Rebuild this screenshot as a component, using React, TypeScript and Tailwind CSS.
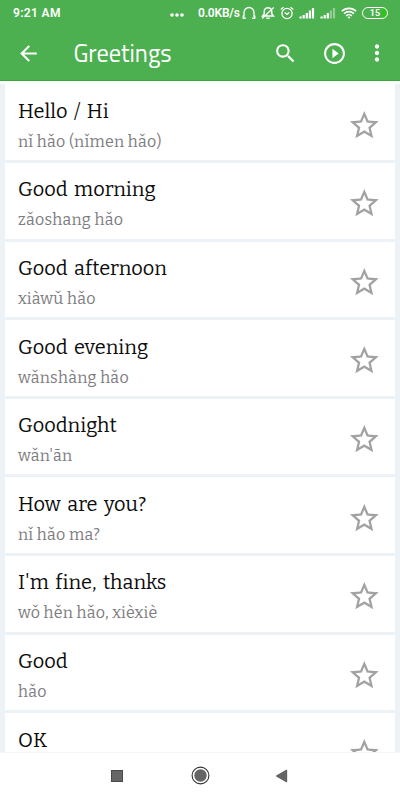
interface Phrase {
  text: string;
  pinyin?: string;
}

const phrases: Phrase[] = [
  { text: 'Hello / Hi', pinyin: 'nǐ hǎo (nǐmen hǎo)' },
  { text: 'Good morning', pinyin: 'zǎoshang hǎo' },
  { text: 'Good afternoon', pinyin: 'xiàwǔ hǎo' },
  { text: 'Good evening', pinyin: 'wǎnshàng hǎo' },
  { text: 'Goodnight', pinyin: "wǎn'ān" },
  { text: 'How are you?', pinyin: 'nǐ hǎo ma?' },
  { text: "I'm fine, thanks", pinyin: 'wǒ hěn hǎo, xièxiè' },
  { text: 'Good', pinyin: 'hǎo' },
  { text: 'OK' },
];

function HeadphonesIcon() {
  return (
    <svg width="14" height="14" viewBox="0 0 14 14" fill="none" stroke="white" strokeWidth="1.3">
      <path d="M2 11V6.5a5 5 0 0 1 10 0V11" />
      <path d="M1.3 9.5v2.7h2.5M12.7 9.5v2.7h-2.5" strokeWidth="1.5" />
    </svg>
  );
}

function MutedBellIcon() {
  return (
    <svg width="14" height="14" viewBox="0 0 14 14" fill="none" stroke="white" strokeWidth="1.4">
      <path d="M1.5 10h11l-1.7-2V5.5a3.8 3.8 0 0 0-7.6 0V8L1.5 10zM5.3 12.2h3.4M1.2 12.5L12.7 1.5" />
    </svg>
  );
}

function AlarmIcon() {
  return (
    <svg width="14" height="14" viewBox="0 0 14 14" fill="none" stroke="white" strokeWidth="1.3">
      <circle cx="7" cy="7.5" r="5.1" />
      <path d="M4.7 6.5L7 8.3l2.3-1.8M.8 3.5L3.5 1.2M13.2 3.5L10.5 1.2" />
    </svg>
  );
}

function SignalIcon({ bars }: { bars: number }) {
  return (
    <svg width="16" height="12" viewBox="0 0 16 12" fill="white">
      {[2, 3.5, 5.5, 8, 10.5].map((h, i) => (
        <rect key={h} x={0.5 + i * 3.1} y={11.5 - h} width="2.2" height={h} opacity={i < bars ? 1 : 0.4} />
      ))}
    </svg>
  );
}

function WifiIcon() {
  return (
    <svg width="16" height="12" viewBox="0 0 16 12" fill="none" stroke="white" strokeWidth="1.6">
      <path d="M.8 4.3a10.3 10.3 0 0 1 14.4 0M3 6.7a7.1 7.1 0 0 1 10 0M5.2 8.9a4 4 0 0 1 5.6 0" />
      <path d="M8 11.8L6.5 10.2a2.1 2.1 0 0 1 3 0z" fill="white" stroke="none" />
    </svg>
  );
}

function StatusBar() {
  return (
    <div className="flex h-[25px] items-center pl-[13px] pr-[12px] font-['Roboto',sans-serif] text-[12px] font-semibold">
      <span className="tracking-[0.35px]">9:21 AM</span>
      <svg width="14" height="4" viewBox="0 0 14 4" fill="white" className="ml-auto mt-[5px]">
        <circle cx="2" cy="2" r="1.8" />
        <circle cx="7" cy="2" r="1.8" />
        <circle cx="12" cy="2" r="1.8" />
      </svg>
      <span className="ml-[14px] w-[44px] whitespace-nowrap tracking-[-0.2px]">0.0KB/s</span>
      <div className="flex items-center">
        <HeadphonesIcon />
        <span className="ml-[5px]"><MutedBellIcon /></span>
        <span className="ml-[5px]"><AlarmIcon /></span>
        <span className="ml-[5px]"><SignalIcon bars={5} /></span>
        <span className="ml-[5px]"><SignalIcon bars={3} /></span>
        <span className="ml-[5px]"><WifiIcon /></span>
        <span className="ml-[5px] flex h-[12px] w-[26px] items-center justify-center rounded-full border-[1.5px] border-white bg-linear-to-r from-transparent from-80% to-[#2fc41c] to-80% pt-px text-[9px] leading-none">
          15
        </span>
      </div>
    </div>
  );
}

function Toolbar() {
  return (
    <div className="flex h-[56px] items-center pl-[16px] pr-[10px]">
      <svg width="25" height="25" viewBox="0 0 24 24" fill="white">
        <path d="M20 11H7.83l5.59-5.59L12 4l-8 8 8 8 1.41-1.41L7.83 13H20v-2z" />
      </svg>
      <h1 className="ml-[32.4px] font-['Titillium_Web','Noto_Sans',sans-serif] text-[24.3px] leading-none">Greetings</h1>
      <svg width="25" height="25" viewBox="0 0 24 24" fill="white" className="ml-auto">
        <path d="M15.5 14h-.79l-.28-.27A6.471 6.471 0 0 0 16 9.5 6.5 6.5 0 1 0 9.5 16c1.61 0 3.09-.59 4.23-1.57l.27.28v.79l5 4.99L20.49 19l-4.99-5zm-6 0C7.01 14 5 11.99 5 9.5S7.01 5 9.5 5 14 7.01 14 9.5 11.99 14 9.5 14z" />
      </svg>
      <svg width="25" height="25" viewBox="0 0 24 24" fill="white" className="ml-[24px]">
        <path d="M10 16.5l6-4.5-6-4.5v9zM12 2C6.48 2 2 6.48 2 12s4.48 10 10 10 10-4.48 10-10S17.52 2 12 2zm0 18c-4.41 0-8-3.59-8-8s3.59-8 8-8 8 3.59 8 8-3.59 8-8 8z" />
      </svg>
      <svg width="26" height="26" viewBox="0 0 24 24" fill="white" className="ml-[17px]">
        <path d="M12 8c1.1 0 2-.9 2-2s-.9-2-2-2-2 .9-2 2 .9 2 2 2zm0 2c-1.1 0-2 .9-2 2s.9 2 2 2 2-.9 2-2-.9-2-2-2zm0 6c-1.1 0-2 .9-2 2s.9 2 2 2 2-.9 2-2-.9-2-2-2z" />
      </svg>
    </div>
  );
}

function StarIcon() {
  return (
    <svg width="34.6" height="34.6" viewBox="0 0 24 24" fill="#a3a1a1" className="mt-[23.2px] shrink-0">
      <path d="M22 9.24l-7.19-.62L12 2 9.19 8.63 2 9.24l5.46 4.73L5.82 21 12 17.27 18.18 21l-1.63-7.03L22 9.24zM12 15.4l-3.76 2.27 1-4.28-3.32-2.88 4.38-.38L12 6.1l1.71 4.04 4.38.38-3.32 2.88 1 4.28L12 15.4z" />
    </svg>
  );
}

function PhraseCard({ phrase }: { phrase: Phrase }) {
  return (
    <li className="flex h-[75.6px] shrink-0 items-start justify-between bg-white px-[13px]">
      <div className="pt-[11.5px] font-['Roboto_Slab','Bitter','DejaVu_Serif_Condensed',serif]">
        <p className="text-[20px] leading-[30px] text-[#0c0c0c] [word-spacing:2.5px]">{phrase.text}</p>
        {phrase.pinyin && (
          <p className="text-[16px] leading-[32px] tracking-[0.24px] text-[#7d7c80]">{phrase.pinyin}</p>
        )}
      </div>
      <StarIcon />
    </li>
  );
}

function NavBar() {
  return (
    <nav className="flex h-[48px] shrink-0 items-center justify-between border-t border-[#f6f6f6] bg-white pb-[2px] pl-[111px] pr-[112px]">
      <svg width="12" height="12" viewBox="0 0 12 12">
        <rect x="0.5" y="0.5" width="11" height="11" fill="#666" stroke="#4a4a4a" />
      </svg>
      <svg width="20" height="19" viewBox="0 0 20 19">
        <circle cx="10.5" cy="9.5" r="8.4" fill="none" stroke="#333" strokeWidth="1.1" />
        <circle cx="10.5" cy="9.5" r="6.2" fill="#666" />
      </svg>
      <svg width="12" height="14" viewBox="0 0 12 14">
        <path d="M10.7 1v12L.3 7z" fill="#666" stroke="#4a4a4a" strokeWidth="0.8" />
      </svg>
    </nav>
  );
}

export default function App() {
  return (
    <div className="flex h-[800px] w-[400px] flex-col overflow-hidden bg-white">
      <header className="h-[81px] shrink-0 border-b border-[#3ca63e] bg-[#4caf50] text-white">
        <StatusBar />
        <Toolbar />
      </header>
      <main className="mt-[3.4px] min-h-0 flex-1 overflow-hidden bg-[#edf2f6] px-[5px]">
        <ul className="flex flex-col gap-[3px]">
          {phrases.map((phrase) => (
            <PhraseCard key={phrase.text} phrase={phrase} />
          ))}
        </ul>
      </main>
      <NavBar />
    </div>
  );
}
